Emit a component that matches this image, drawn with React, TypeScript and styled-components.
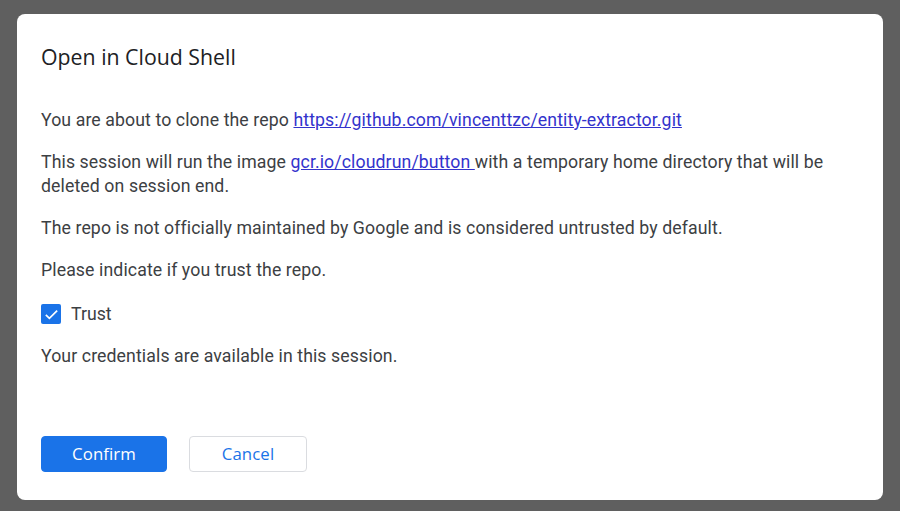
import React from "react";
import styled, { createGlobalStyle } from "styled-components";

const Global = createGlobalStyle`
  html, body { margin: 0; padding: 0; }
  body { background: #5f5f5f; font-family: Roboto, "Liberation Sans", sans-serif; }
`;

const Backdrop = styled.div`
  width: 900px;
  height: 511px;
  box-sizing: border-box;
  padding: 14px 17px 11px 17px;
  background: #5f5f5f;
`;

const Dialog = styled.div`
  height: 100%;
  box-sizing: border-box;
  background: #fff;
  border-radius: 8px;
  padding: 23px 24px 28px 24px;
  display: flex;
  flex-direction: column;
`;

const Title = styled.h2`
  margin: 0;
  font-family: "Open Sans", Roboto, sans-serif;
  font-weight: 400;
  font-size: 21.3px;
  line-height: 40px;
  color: #202124;
`;

const Body = styled.div`
  margin-top: 31px;
  display: flex;
  flex-direction: column;
  gap: 18px;
  flex: 1;
`;

const P = styled.p`
  margin: 0;
  font-size: 17.7px;
  line-height: 24px;
  color: #3c4043;
  letter-spacing: 0.1px;
`;

const Link = styled.a`
  color: #3333cc;
  text-decoration: underline;
`;

const CheckRow = styled.label`
  display: flex;
  align-items: center;
  gap: 10px;
  font-size: 17.7px;
  line-height: 24px;
  color: #3c4043;
  padding-top: 2px;
`;

const Box = styled.span`
  width: 20px;
  height: 20px;
  border-radius: 2px;
  background: #1a73e8;
  display: inline-flex;
  align-items: center;
  justify-content: center;
`;

const Actions = styled.div`
  display: flex;
  gap: 22px;
`;

const Button = styled.button<{ $primary?: boolean }>`
  height: 36px;
  padding: 0 0 2px;
  border-radius: 4px;
  font-family: "Open Sans", Roboto, sans-serif;
  font-size: 16.8px;
  font-weight: 500;
  letter-spacing: 0.1px;
  cursor: pointer;
  width: ${(p) => (p.$primary ? "126px" : "118px")};
  background: ${(p) => (p.$primary ? "#1a73e8" : "#fff")};
  color: ${(p) => (p.$primary ? "#fff" : "#1a73e8")};
  border: 1px solid ${(p) => (p.$primary ? "#1a73e8" : "#dadce0")};
`;

export default function App() {
  return (
    <>
      <Global />
      <Backdrop>
        <Dialog>
          <Title>Open in Cloud Shell</Title>
          <Body>
            <P>
              You are about to clone the repo{" "}
              <Link href="#">https://github.com/vincenttzc/entity-extractor.git</Link>
            </P>
            <P>
              This session will run the image <Link href="#">gcr.io/cloudrun/button </Link>with a
              temporary home directory that will be deleted on session end.
            </P>
            <P>The repo is not officially maintained by Google and is considered untrusted by default.</P>
            <P>Please indicate if you trust the repo.</P>
            <CheckRow>
              <Box>
                <svg width="17" height="17" viewBox="0 0 24 24">
                  <path d="M4 12.5l5 5L20 6.5" fill="none" stroke="#fff" strokeWidth="2.4" />
                </svg>
              </Box>
              Trust
            </CheckRow>
            <P>Your credentials are available in this session.</P>
          </Body>
          <Actions>
            <Button $primary>Confirm</Button>
            <Button>Cancel</Button>
          </Actions>
        </Dialog>
      </Backdrop>
    </>
  );
}
